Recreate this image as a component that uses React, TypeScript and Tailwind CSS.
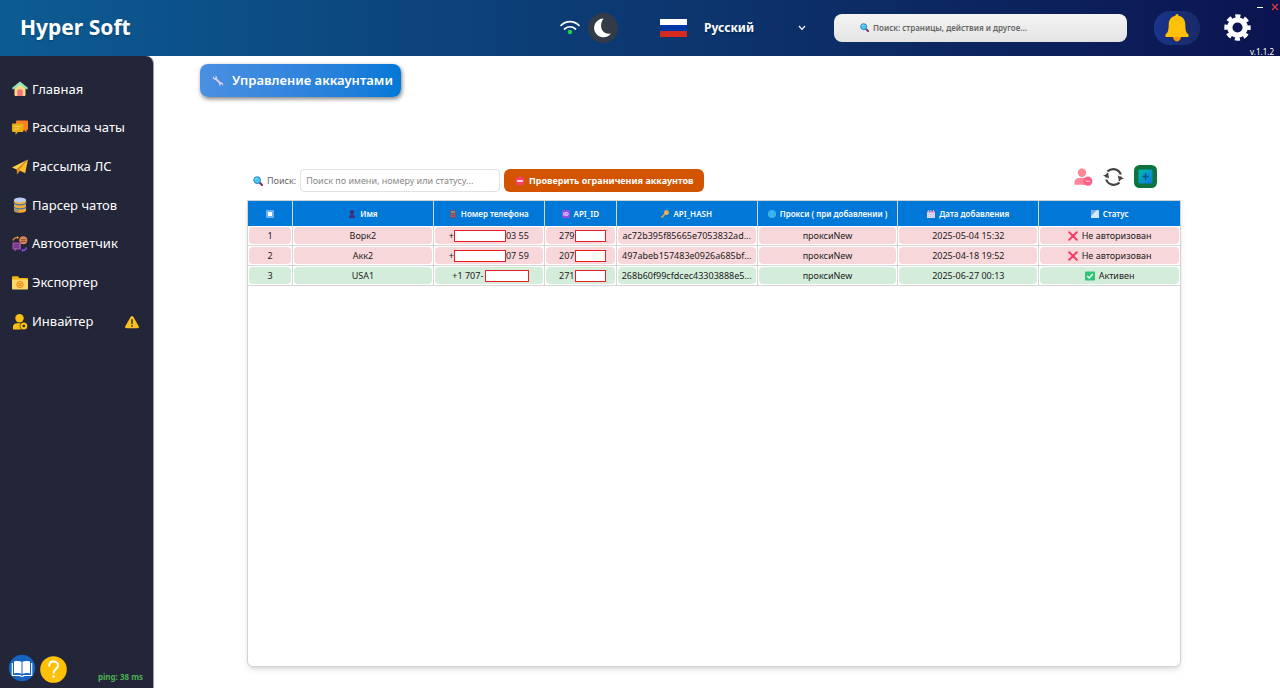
import { useState } from 'react';
import type { ReactNode } from 'react';

type Status = 'active' | 'unauthorized';

interface Account {
  name: string;
  phone: ReactNode;
  apiId: string;
  apiHash: string;
  proxy: string;
  addedAt: string;
  status: Status;
}

const ACCOUNTS: Account[] = [
  {
    name: 'Ворк2',
    phone: (
      <>
        +<Hidden className="w-[52px]" />03 55
      </>
    ),
    apiId: '279',
    apiHash: 'ac72b395f85665e7053832ad...',
    proxy: 'проксиNew',
    addedAt: '2025-05-04 15:32',
    status: 'unauthorized',
  },
  {
    name: 'Акк2',
    phone: (
      <>
        +<Hidden className="w-[52px]" />07 59
      </>
    ),
    apiId: '207',
    apiHash: '497abeb157483e0926a685bf...',
    proxy: 'проксиNew',
    addedAt: '2025-04-18 19:52',
    status: 'unauthorized',
  },
  {
    name: 'USA1',
    phone: (
      <>
        <span className="pr-0.5 pl-1">+1 707-</span>
        <Hidden className="w-[44px]" />
      </>
    ),
    apiId: '271',
    apiHash: '268b60f99cfdcec43303888e5...',
    proxy: 'проксиNew',
    addedAt: '2025-06-27 00:13',
    status: 'active',
  },
];

function Hidden({ className }: { className: string }) {
  return <span className={`h-3 shrink-0 border border-[#ed1c24] bg-white ${className}`} />;
}

function SearchIcon({ className }: { className: string }) {
  return (
    <svg viewBox="0 0 16 16" className={className}>
      <path d="M10 10l4.5 4.5" stroke="#7b2d73" strokeWidth="3.4" strokeLinecap="round" />
      <circle cx="6.6" cy="6.6" r="5.4" fill="#4cc3f5" stroke="#2f86b5" strokeWidth="1.6" />
      <path d="M3.8 6a3 3 0 0 1 2.6-2.4" stroke="#b5ebff" strokeWidth="1.2" fill="none" />
    </svg>
  );
}

/* Sidebar icons */

function HomeIcon() {
  return (
    <svg viewBox="0 0 16 16" className="size-4">
      <path d="M2.500 7.500L8 3l5.500 4.500V14a1 1 0 0 1-1 1h-9a1 1 0 0 1-1-1z" fill="#fbdc84" />
      <path d="M5.300 15V9.800a1.300 1.300 0 0 1 1.300-1.300h2.800a1.300 1.300 0 0 1 1.300 1.300V15z" fill="#f5727f" />
      <path d="M8 .6L.5 6.600c-.6.600 0 1.900 1 1.600L8 4l6.500 4.200c1 .3 1.600-1 1-1.600z" fill="#93e6bd" />
    </svg>
  );
}

function ChatsIcon() {
  return (
    <svg viewBox="0 0 16 16" className="size-4">
      <path d="M5 .5h10a1 1 0 0 1 1 1v7.500a1 1 0 0 1-1 1h-.5V12.500L12 10H5a1 1 0 0 1-1-1V1.500a1 1 0 0 1 1-1z" fill="#fb8124" />
      <path d="M1 3.500h9.500a1 1 0 0 1 1 1V11a1 1 0 0 1-1 1H6l-2.500 2.700V12H1a1 1 0 0 1-1-1V4.500a1 1 0 0 1 1-1z" fill="#e9ae10" />
      <path d="M2.500 6.500h6M2.500 9h4.500" stroke="#f8d565" strokeWidth="1" />
    </svg>
  );
}

function PlaneIcon() {
  return (
    <svg viewBox="0 0 16 16" className="size-4">
      <path d="M16 .5L0 8.500l4.700 2z" fill="#ffd24a" />
      <path d="M16 .5L4.700 10.500l.3 5 3-3.800z" fill="#e98a15" />
      <path d="M16 .5L7 11.200l6.200 3z" fill="#fcc02d" />
    </svg>
  );
}

function DatabaseIcon() {
  return (
    <svg viewBox="0 0 16 16" className="size-4">
      <path d="M2 3v10.500c0 1.300 2.700 2.300 6 2.300s6-1 6-2.300V3z" fill="#f5a93a" />
      <path d="M2 5.500c0 1.300 2.700 2.300 6 2.300s6-1 6-2.300M2 9.500c0 1.300 2.700 2.300 6 2.300s6-1 6-2.300" stroke="#3f78a8" strokeWidth="1.200" fill="none" />
      <path d="M2 12.500c1 1.300 3 1.300 5 1.300" stroke="#4d86b8" strokeWidth="1" fill="none" />
      <ellipse cx="8" cy="3" rx="6" ry="2.600" fill="#b9cdf3" />
    </svg>
  );
}

function AutoReplyIcon() {
  return (
    <svg viewBox="0 0 16 16" className="size-4">
      <path d="M1 4.500C1.500 2.500 3 1.500 5.500 1.500" stroke="#f0a030" strokeWidth="1.200" fill="none" />
      <path d="M5 0l2 1.500-2 1.700z" fill="#f0a030" />
      <circle cx="11.300" cy="4.300" r="4" fill="#d98357" />
      <path d="M9 3.600h4.600M9 5.500h4.600" stroke="#7d4631" strokeWidth=".8" />
      <path d="M.5 6.500h8.500v7H5l-2.500 2v-2h-2z" fill="#9a4da5" />
      <path d="M2 8.800h5M2 11h5" stroke="#4f2866" strokeWidth=".9" />
      <path d="M14.500 11.500c-.5 2-1.800 3-4 3" stroke="#7c46d8" strokeWidth="1.600" fill="none" />
      <path d="M11 12.500l-2 2 2 1.500z" fill="#7c46d8" />
    </svg>
  );
}

function ExportIcon() {
  return (
    <svg viewBox="0 0 16 16" className="size-4">
      <path d="M0 2.200a1 1 0 0 1 1-1h5l1.500 1.800H15a1 1 0 0 1 1 1V8H0z" fill="#f5b50f" />
      <rect y="4.500" width="16" height="10" rx="1" fill="#ffd768" />
      <circle cx="8" cy="9.500" r="3.200" fill="#fbc23a" stroke="#f08a1d" strokeWidth="1" />
      <path d="M6.300 8.700h3M9.700 10.400h-3" stroke="#ef7d18" strokeWidth="1" />
    </svg>
  );
}

function InviteIcon() {
  return (
    <svg viewBox="0 0 16 16" className="size-4">
      <circle cx="7.500" cy="4.300" r="4.200" fill="#fbbf10" />
      <path d="M1 15.500v-2.700c0-2.200 1.800-3.600 4-3.600h4.500v6.300z" fill="#fbbf10" />
      <circle cx="11.800" cy="12" r="4.100" fill="#232539" />
      <circle cx="11.800" cy="12" r="2.400" fill="none" stroke="#fbbf10" strokeWidth="2.200" />
    </svg>
  );
}

function WarningIcon() {
  return (
    <svg viewBox="0 0 16 16" className="size-3.5">
      <path d="M8 1c.6 0 1 .3 1.300.8l6.400 11c.6 1.100 0 2.200-1.200 2.200h-13C.3 15-.3 13.900.3 12.800l6.400-11C7 1.300 7.400 1 8 1z" fill="#fbc21b" />
      <path d="M8 5.300v4.500" stroke="#33302a" strokeWidth="1.700" strokeLinecap="round" />
      <circle cx="8" cy="12.500" r="1" fill="#33302a" />
    </svg>
  );
}

/* Table header icons, 8px each */

function CheckAllIcon() {
  return (
    <svg viewBox="0 0 8 8" className="mx-auto size-2">
      <rect width="8" height="8" rx="1" fill="#6fb0f5" />
      <rect x="2" y="2" width="4" height="4" fill="#fff" />
    </svg>
  );
}

function NameIcon() {
  return (
    <svg viewBox="0 0 8 8" className="size-2">
      <circle cx="4" cy="2.300" r="2.200" fill="#40307a" />
      <path d="M1 8c0-2.500 1-3.500 3-3.500S7 5.500 7 8z" fill="#40307a" />
    </svg>
  );
}

function PhoneIcon() {
  return (
    <svg viewBox="0 0 8 8" className="size-2">
      <rect x="1" width="6" height="8" rx="1" fill="#7d5068" />
      <rect x="2" y="1" width="4" height="2" fill="#63a287" />
      <path d="M2.300 4.500h3.400M2.300 6.300h3.400" stroke="#c98f9c" strokeWidth=".7" strokeDasharray=".8 .5" />
    </svg>
  );
}

function IdIcon() {
  return (
    <svg viewBox="0 0 8 8" className="size-2">
      <rect width="8" height="8" rx="1" fill="#8f50df" />
      <path d="M2 2.300v3.400M3.800 2.500h.8c2 0 2 3 0 3h-.8z" stroke="#fff" strokeWidth=".9" fill="none" />
    </svg>
  );
}

function KeyIcon() {
  return (
    <svg viewBox="0 0 8 8" className="size-2">
      <path d="M4.500 3.500L.8 7.200" stroke="#f2a13a" strokeWidth="1.500" strokeLinecap="round" />
      <path d="M1.700 6.300l1 1" stroke="#f2a13a" strokeWidth=".9" />
      <circle cx="5.500" cy="2.500" r="2.400" fill="#f7b54a" />
      <circle cx="6.200" cy="1.800" r=".6" fill="#9c6a28" />
    </svg>
  );
}

function GlobeIcon() {
  return (
    <svg viewBox="0 0 8 8" className="size-2">
      <circle cx="4" cy="4" r="4" fill="#41bdf2" />
      <path d="M0 4h8M1 2h6M1 6h6" stroke="#2195d8" strokeWidth=".3" />
      <ellipse cx="4" cy="4" rx="2" ry="3.900" stroke="#2195d8" strokeWidth=".3" fill="none" />
    </svg>
  );
}

function CalendarIcon() {
  return (
    <svg viewBox="0 0 8 8" className="size-2">
      <rect y="1" width="8" height="7" rx=".6" fill="#e3d8f3" />
      <path d="M0 1h8v1.500H0z" fill="#c77fb4" />
      <path d="M1.500 0v1.600M4 0v1.600M6.500 0v1.600" stroke="#cfd3f0" strokeWidth=".8" />
      <path d="M1 4.500h6M1 6.300h6" stroke="#a9a0cf" strokeWidth=".6" strokeDasharray="1 .7" />
    </svg>
  );
}

function ChartIcon() {
  return (
    <svg viewBox="0 0 8 8" className="size-2">
      <rect width="8" height="8" rx=".6" fill="#d7e6fa" />
      <path d="M0 0h6L0 6z" fill="#77aeee" />
    </svg>
  );
}

const NAV = [
  { label: 'Главная', icon: <HomeIcon /> },
  { label: 'Рассылка чаты', icon: <ChatsIcon /> },
  { label: 'Рассылка ЛС', icon: <PlaneIcon /> },
  { label: 'Парсер чатов', icon: <DatabaseIcon /> },
  { label: 'Автоответчик', icon: <AutoReplyIcon /> },
  { label: 'Экспортер', icon: <ExportIcon /> },
  { label: 'Инвайтер', icon: <InviteIcon />, warning: true },
];

const COLUMNS = [
  { label: 'Имя', icon: <NameIcon />, width: '' },
  { label: 'Номер телефона', icon: <PhoneIcon />, width: 'w-[111px]' },
  { label: 'API_ID', icon: <IdIcon />, width: 'w-[72px]' },
  { label: 'API_HASH', icon: <KeyIcon />, width: '' },
  { label: 'Прокси ( при добавлении )', icon: <GlobeIcon />, width: '' },
  { label: 'Дата добавления', icon: <CalendarIcon />, width: '' },
  { label: 'Статус', icon: <ChartIcon />, width: '' },
];

function Header() {
  const [language, setLanguage] = useState('ru');
  const [query, setQuery] = useState('');

  return (
    <header className="relative flex h-14 shrink-0 items-center bg-linear-to-r from-[#0c5c93] to-[#0b1450] pr-[29px] pb-px pl-5 text-white">
      <div className="text-[21px] font-bold text-shadow-sm">Hyper Soft</div>

      <div className="ml-auto flex items-center gap-2">
        <svg viewBox="0 0 20 16" className="h-4 w-5" fill="none" strokeLinecap="round">
          <path d="M1 5.500C6 .4 14 .4 19 5.500" stroke="#fff" strokeWidth="1.700" />
          <path d="M4.500 9c3.300-3 7.700-3 11 0" stroke="#fff" strokeWidth="1.700" />
          <circle cx="10" cy="12" r="2.200" fill="#1fd14f" />
        </svg>
        <button aria-label="Тёмная тема" className="flex size-[30px] items-center justify-center rounded-full bg-[#333b48]">
          <svg viewBox="0 0 20 20" className="size-5" fill="#fff">
            <path d="M10.500.5A9.400 9.400 0 1 0 18 15.500C8.500 17.500 5.500 7 10.500.5z" />
          </svg>
        </button>
      </div>

      <div className="ml-[42px] flex items-center">
        <svg viewBox="0 0 27 18" className="h-[18px] w-[27px]">
          <path d="M0 0h27v6H0z" fill="#fff" />
          <path d="M0 6h27v6H0z" fill="#0039a6" />
          <path d="M0 12h27v6H0z" fill="#d52b1e" />
        </svg>
        <div className="relative ml-[17px]">
          <select
            aria-label="Язык"
            value={language}
            onChange={e => setLanguage(e.target.value)}
            className="block w-[104px] appearance-none bg-transparent text-xs font-bold text-shadow-sm"
          >
            <option value="ru">Русский</option>
          </select>
          <svg viewBox="0 0 8 6" className="pointer-events-none absolute top-1/2 right-0.5 h-1.5 w-2 -translate-y-1/2" fill="none">
            <path d="M1 1l3 3.300L7 1" stroke="#fff" strokeWidth="1.200" />
          </svg>
        </div>
      </div>

      <label className="ml-[26px] flex h-7 w-[293px] items-center gap-1 rounded-lg bg-linear-to-b from-[#f4f4f4] to-[#e4e4e4] pl-[26px]">
        <SearchIcon className="size-[9px]" />
        <input
          aria-label="Поиск"
          value={query}
          onChange={e => setQuery(e.target.value)}
          placeholder="Поиск: страницы, действия и другое..."
          className="min-w-0 flex-1 bg-transparent text-[8px] font-semibold text-gray-800 outline-none placeholder:text-[#666]"
        />
      </label>

      <button aria-label="Уведомления" className="ml-[27px] flex h-[34px] w-[46px] items-center justify-center rounded-2xl bg-linear-to-r from-[#19348c] to-[#182a66]">
        <svg viewBox="0 0 24 28" className="h-7 w-6">
          <path d="M8 22.500a4 5 0 0 0 8 0z" fill="#ff9800" />
          <path d="M12 0c1 0 1.500.7 1.500 1.800 4.500.8 6.800 4.500 6.800 9 0 6 1 8 3.200 9.700V23H.5v-2.500c2.200-1.700 3.200-3.700 3.200-9.700 0-4.500 2.300-8.200 6.800-9C10.500.7 11 0 12 0z" fill="#ffc107" />
        </svg>
      </button>
      <button aria-label="Настройки" className="ml-6">
        <svg viewBox="0 0 28 28" className="size-[27px]">
          <circle cx="14" cy="14" r="8" fill="none" stroke="#fff" strokeWidth="5.500" />
          <circle cx="14" cy="14" r="11.700" fill="none" stroke="#fff" strokeWidth="4" strokeDasharray="5.200 3.989" strokeDashoffset="2.600" />
        </svg>
      </button>

      <div className="absolute top-0.5 right-px flex items-center gap-1.5">
        <button aria-label="Свернуть" className="flex size-2.5 items-center justify-center">
          <span className="h-px w-1.5 bg-white" />
        </button>
        <button aria-label="Закрыть">
          <svg viewBox="0 0 8 8" className="size-2">
            <path d="M1 1l6 6M7 1L1 7" stroke="#e53b3b" strokeWidth="1.200" />
          </svg>
        </button>
      </div>
      <div className="absolute right-1.5 bottom-0 text-[8px] leading-2">v.1.1.2</div>
    </header>
  );
}

function Sidebar() {
  return (
    <aside className="flex w-[154px] shrink-0 flex-col justify-between rounded-tr-lg border-r border-[#9a9ba5] bg-[#232539] pt-3.5 text-white">
      <nav className="grid h-[271px] grid-rows-7">
        {NAV.map(item => (
          <a key={item.label} href="#" className="flex items-center gap-1 pr-3.5 pl-3 text-[13px]">
            {item.icon}
            <span className="flex-1">{item.label}</span>
            {item.warning && <WarningIcon />}
          </a>
        ))}
      </nav>

      <div className="flex items-center pr-2.5 pb-1 pl-2">
        <button aria-label="Документация" className="mb-0.5">
          <svg viewBox="0 0 28 28" className="size-7">
            <circle cx="14" cy="14" r="13.200" fill="#1565c0" />
            <path d="M6 7.500c3-.8 5.500-.6 7.500.3v12c-2-.9-4.500-1.100-7.500-.3zM22 7.500c-3-.8-5.500-.6-7.500.3v12c2-.9 4.500-1.100 7.500-.3z" fill="#fff" />
            <path d="M4.300 9v12.500h7.700c1 1 3 1 4 0h7.700V9" stroke="#fff" strokeWidth="1.200" fill="none" />
          </svg>
        </button>
        <button aria-label="Помощь" className="ml-1">
          <svg viewBox="0 0 27 27" className="size-[27px]" fill="none">
            <circle cx="13.500" cy="13.500" r="13.300" fill="#ffc107" />
            <path d="M9.300 9.800c0-5.600 8.700-5.600 8.700-.3 0 3.300-4.300 3.600-4.300 7.300" stroke="#fff" strokeWidth="1.900" strokeLinecap="round" />
            <circle cx="13.600" cy="20.600" r="1.300" fill="#fff" />
          </svg>
        </button>
        <div className="mt-4 ml-auto text-[8px] font-bold text-[#4caf50]">ping: 38 ms</div>
      </div>
    </aside>
  );
}

function Toolbar() {
  const [query, setQuery] = useState('');

  return (
    <div className="flex items-end justify-between pr-6 pl-1.5">
      <div className="flex items-center">
        <label htmlFor="account-search" className="flex items-center gap-1 text-[9px] text-[#666]">
          <SearchIcon className="size-2.5" />
          Поиск:
        </label>
        <input
          id="account-search"
          value={query}
          onChange={e => setQuery(e.target.value)}
          placeholder="Поиск по имени, номеру или статусу..."
          className="ml-1 h-[23px] w-[200px] rounded-sm border border-[#e3e3e3] px-[5px] text-[9px] outline-none placeholder:text-[#888]"
        />
        <button className="ml-1 flex h-[23px] w-[200px] items-center justify-center gap-1 rounded-md bg-[#d35400] text-[9px] font-bold text-white">
          <svg viewBox="0 0 10 10" className="size-2.5">
            <circle cx="5" cy="5" r="4.600" fill="#f8406c" />
            <path d="M2.200 5h5.600" stroke="#fff" strokeWidth="1.600" />
          </svg>
          Проверить ограничения аккаунтов
        </button>
      </div>

      <div className="flex items-center gap-2.5 pb-1">
        <button aria-label="Удалить аккаунт">
          <svg viewBox="0 0 19 18" className="h-[18px] w-[19px]">
            <circle cx="8" cy="4.800" r="4.200" fill="#ff8599" />
            <path d="M.5 16.700v-2.500C.5 11.700 2.500 10 5 10h6.500v6.700z" fill="#ff8599" />
            <circle cx="13.800" cy="13.200" r="4.600" fill="#fb5f86" />
            <path d="M11.600 13.200H16" stroke="#ffb3c4" strokeWidth="1.400" />
          </svg>
        </button>
        <button aria-label="Обновить">
          <svg viewBox="0 0 21 18" className="h-[18px] w-[21px]" fill="none">
            <path d="M4.500 3.600A8 8 0 0 1 17.800 6.500M16.500 14.400A8 8 0 0 1 3.200 11.500" stroke="#444" strokeWidth="2.200" />
            <path d="M3 9.500A7.500 7.500 0 0 1 5 5M18 8.500a7.500 7.500 0 0 1-2 4.500" stroke="#444" strokeWidth="1.600" />
            <path d="M0 7.500l5.200-1.800 1 4.800zM21 10.500l-5.200 1.800-1-4.800z" fill="#444" />
          </svg>
        </button>
        <button aria-label="Добавить аккаунт">
          <svg viewBox="0 0 23 23" className="size-[23px]">
            <defs>
              <linearGradient id="add-fill" x1="0" y1="0" x2="1" y2="1">
                <stop offset="0" stopColor="#00bcae" />
                <stop offset="1" stopColor="#1075e2" />
              </linearGradient>
            </defs>
            <rect width="23" height="23" rx="5.500" fill="#10733f" />
            <rect x="4.500" y="4.500" width="14" height="14" rx="1.500" fill="url(#add-fill)" />
            <path d="M11.500 8.300v6.400M8.300 11.500h6.400" stroke="#07577b" strokeWidth="1.400" />
          </svg>
        </button>
      </div>
    </div>
  );
}

function StatusLabel({ status }: { status: Status }) {
  if (status === 'active') {
    return (
      <>
        <svg viewBox="0 0 10 10" className="size-2.5">
          <rect y=".5" width="10" height="9" rx="1" fill="#2fc47a" />
          <path d="M2.200 5l2 2 3.600-4" stroke="#fff" strokeWidth="1.300" fill="none" />
        </svg>
        Активен
      </>
    );
  }
  return (
    <>
      <svg viewBox="0 0 10 10" className="size-2.5">
        <path d="M1.200 1.200l7.600 7.600M8.800 1.200L1.200 8.800" stroke="#f73e68" strokeWidth="2" strokeLinecap="round" />
      </svg>
      Не авторизован
    </>
  );
}

function Cell({ status, children }: { status: Status; children: ReactNode }) {
  return (
    <td className="border-r border-b border-[#d6d6d6] p-px last:border-r-0">
      <div
        className={`flex h-[17px] items-center justify-center gap-1 overflow-hidden rounded-sm whitespace-nowrap ${
          status === 'active' ? 'bg-[#d4edda]' : 'bg-[#f8d7da]'
        }`}
      >
        {children}
      </div>
    </td>
  );
}

function AccountsTable() {
  return (
    <div className="flex-1 overflow-hidden rounded-b-md border border-[#d2d2d2] bg-white shadow-md">
      <table className="w-full table-fixed border-separate border-spacing-0 text-center text-[9px] text-[#222]">
        <thead>
          <tr className="h-[25px] bg-[#0078d7] text-[8px] text-white">
            <th className="w-[45px] border-r border-[#d6d6d6]">
              <CheckAllIcon />
            </th>
            {COLUMNS.map(col => (
              <th key={col.label} className={`border-r border-[#d6d6d6] font-semibold last:border-r-0 ${col.width}`}>
                <div className="flex items-center justify-center gap-1 whitespace-nowrap">
                  {col.icon}
                  {col.label}
                </div>
              </th>
            ))}
          </tr>
        </thead>
        <tbody>
          {ACCOUNTS.map((a, i) => (
            <tr key={a.name}>
              <Cell status={a.status}>{i + 1}</Cell>
              <Cell status={a.status}>{a.name}</Cell>
              <Cell status={a.status}>
                <span className="flex items-center">{a.phone}</span>
              </Cell>
              <Cell status={a.status}>
                <span className="flex items-center pl-1">
                  {a.apiId}
                  <Hidden className="w-[31px]" />
                </span>
              </Cell>
              <Cell status={a.status}>{a.apiHash}</Cell>
              <Cell status={a.status}>{a.proxy}</Cell>
              <Cell status={a.status}>{a.addedAt}</Cell>
              <Cell status={a.status}>
                <StatusLabel status={a.status} />
              </Cell>
            </tr>
          ))}
        </tbody>
      </table>
    </div>
  );
}

export default function App() {
  return (
    <div className="flex min-h-screen flex-col bg-white font-['Noto_Sans','Open_Sans',sans-serif]">
      <Header />
      <div className="flex flex-1">
        <Sidebar />
        <main className="flex min-w-0 flex-1 flex-col pt-2 pr-[99px] pb-[21px] pl-[93px]">
          <button className="-ml-[47px] flex h-[33px] items-center gap-2 self-start rounded-lg bg-linear-to-r from-[#4a90e2] to-[#0078d7] pr-2 pl-3 text-[13px] font-semibold text-white shadow-[1px_2px_4px_rgba(0,0,0,0.5)]">
            <svg viewBox="0 0 12 12" className="size-3" fill="none">
              <path d="M3.500 3.500l5.300 5.300" stroke="#d8cdea" strokeWidth="2" />
              <path d="M1 1.200c-.8 2 .7 3.800 2.700 3.200C5.300 3.700 5.300 1.500 3.600.4l.2 2-1.300.8z" fill="#e6dcf2" />
              <path d="M11 10.800c.8-2-.7-3.800-2.700-3.200-1.600.7-1.600 2.900.1 4l-.2-2 1.300-.8z" fill="#e6dcf2" />
            </svg>
            Управление аккаунтами
          </button>
          <div className="mt-[68px] mb-2">
            <Toolbar />
          </div>
          <AccountsTable />
        </main>
      </div>
    </div>
  );
}
